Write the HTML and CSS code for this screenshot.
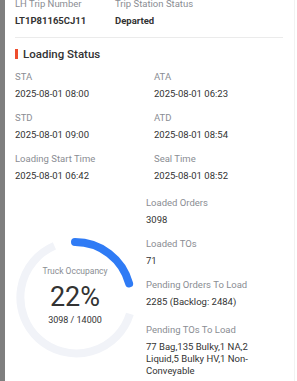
FILE: index.html
```html
<!DOCTYPE html>
<html>
<head>
<meta charset="utf-8">
<link rel="stylesheet" href="styles.css">
</head>
<body>
<div class="shade"></div>
<div class="drawer">
  <div class="content">
    <div class="head">
      <div class="hitem">
        <div class="label">LH Trip Number</div>
        <div class="value bold">LT1P81165CJ11</div>
      </div>
      <div class="hitem">
        <div class="label">Trip Station Status</div>
        <div class="value bold">Departed</div>
      </div>
    </div>
    <div class="section-title"><span class="bar"></span>Loading Status</div>
    <div class="grid">
      <div class="item"><div class="label">STA</div><div class="value">2025-08-01 08:00</div></div>
      <div class="item"><div class="label">ATA</div><div class="value">2025-08-01 06:23</div></div>
      <div class="item"><div class="label">STD</div><div class="value">2025-08-01 09:00</div></div>
      <div class="item"><div class="label">ATD</div><div class="value">2025-08-01 08:54</div></div>
      <div class="item"><div class="label">Loading Start Time</div><div class="value">2025-08-01 06:42</div></div>
      <div class="item"><div class="label">Seal Time</div><div class="value">2025-08-01 08:52</div></div>
    </div>
    <div class="bottom">
      <div class="gauge-col">
        <div class="gauge">
          <svg class="ring" width="120" height="120" viewBox="0 0 120 120">
            <path d="M 114.9 75.9 A 56 56 0 1 1 39.4 7.9" fill="none" stroke="#f1f3f8" stroke-width="8"/>
            <path d="M 60 4 A 56 56 0 0 1 114.1 45.5" fill="none" stroke="#2f7bf5" stroke-width="8" stroke-linecap="round"/>
          </svg>
          <div class="gauge-text">
            <div class="g-label">Truck Occupancy</div>
            <div class="g-pct">22%</div>
            <div class="g-sub">3098 / 14000</div>
          </div>
        </div>
      </div>
      <div class="stats">
        <div class="item"><div class="label">Loaded Orders</div><div class="value">3098</div></div>
        <div class="item"><div class="label">Loaded TOs</div><div class="value">71</div></div>
        <div class="item item-wide"><div class="label">Pending Orders To Load</div><div class="value">2285 (Backlog: 2484)</div></div>
        <div class="item"><div class="label">Pending TOs To Load</div><div class="value">77 Bag,135 Bulky,1 NA,2 Liquid,5 Bulky HV,1 Non-Conveyable</div></div>
      </div>
    </div>
  </div>
  <div class="scrollbar"><div class="thumb"></div></div>
</div>
</body>
</html>
```

FILE: styles.css
```css
html, body {
  margin: 0;
  padding: 0;
  height: 100%;
  overflow: hidden;
}
body {
  display: flex;
  background: #7f7f7f;
  font-family: Roboto, "Liberation Sans", Arial, sans-serif;
  color: #333;
}
.shade {
  width: 5px;
  flex: none;
}
.drawer {
  flex: 1;
  display: flex;
  background: #fff;
  height: 381px;
  overflow: hidden;
}
.content {
  width: 268px;
  padding: 0 11px 0 10px;
  flex: none;
  margin-top: -2px;
}
.scrollbar {
  flex: 1;
  border-left: 1px solid #f2f2f2;
  padding: 5px 2px 0 2px;
}
.thumb {
  width: 9px;
  height: 400px;
  background: #8c8c8c;
  border-radius: 5px 5px 0 0;
}
.label {
  font-size: 9.5px;
  line-height: 12px;
  color: #8a8d93;
}
.value {
  font-size: 9.5px;
  line-height: 12px;
  color: #333;
  margin-top: 5px;
}
.bold {
  font-weight: 700;
}
.head {
  display: grid;
  grid-template-columns: 100px 1fr;
  padding-bottom: 10px;
  border-bottom: 1px solid #ebebeb;
}
.section-title {
  display: flex;
  align-items: center;
  margin-top: 9px;
  font-size: 11.5px;
  line-height: 14px;
  font-weight: 500;
  color: #333;
}
.bar {
  width: 3px;
  height: 10px;
  background: #ee4d2d;
  margin-right: 5px;
}
.grid {
  display: grid;
  grid-template-columns: 139px 1fr;
  margin-top: 10px;
}
.item {
  margin-bottom: 12px;
}
.item-wide {
  margin-bottom: 16px;
}
.bottom {
  display: grid;
  grid-template-columns: 131px 110px;
  margin-top: 3px;
}
.gauge-col {
  padding-top: 41px;
}
.gauge {
  display: grid;
  width: 120px;
  height: 120px;
}
.ring, .gauge-text {
  grid-area: 1 / 1;
}
.gauge-text {
  display: flex;
  flex-direction: column;
  align-items: center;
  padding-top: 27px;
}
.g-label {
  font-size: 8.5px;
  line-height: 12px;
  color: #8a8d93;
}
.g-pct {
  font-size: 27px;
  line-height: 30px;
  margin-top: 5px;
  color: #333;
}
.g-sub {
  font-size: 9px;
  line-height: 12px;
  margin-top: 2px;
  color: #333;
}
```
